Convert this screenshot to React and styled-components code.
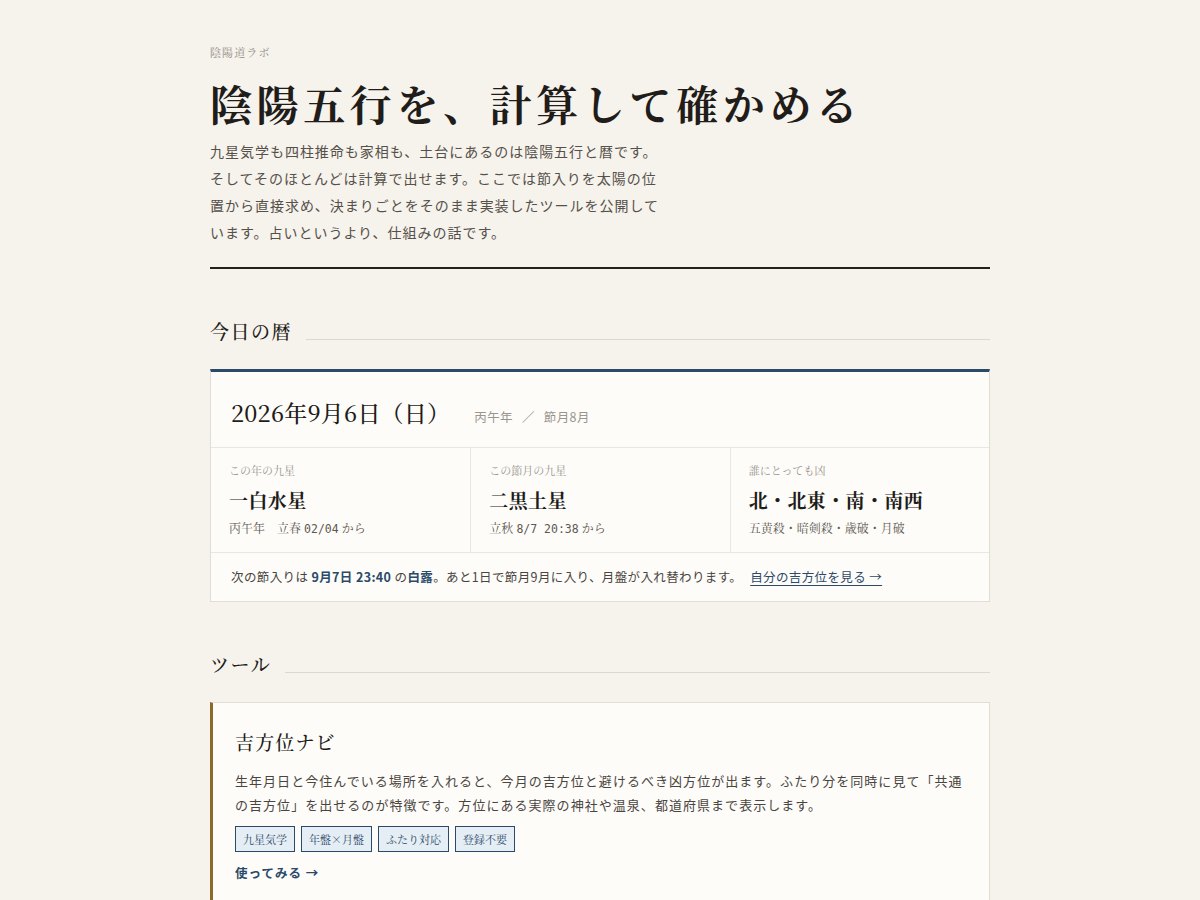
import React from 'react'
import styled, { createGlobalStyle } from 'styled-components'

const GlobalStyle = createGlobalStyle`
    html, body {
        margin: 0;
        padding: 0;
        background: #f6f2ec;
    }
    body {
        font-family: "Noto Sans CJK JP", "Noto Sans", sans-serif;
        color: #2a2622;
    }
`

const serif = `"Noto Serif CJK JP", "Liberation Serif", serif`

const Page = styled.main`
    width: 780px;
    margin: 0 auto;
    padding: 44px 0 0;
`

const SiteName = styled.p`
    font-family: ${serif};
    font-size: 11px;
    letter-spacing: 0.1em;
    color: #8f8a82;
    margin: 0;
`

const Title = styled.h1`
    font-family: ${serif};
    font-size: 42px;
    font-weight: 700;
    letter-spacing: 0.11em;
    color: #1f1c19;
    margin: 14px 0 5px;
    line-height: 1.4;
`

const LeadWrap = styled.div`
    border-bottom: 2px solid #231f1b;
    padding-bottom: 21px;
`

const Lead = styled.p`
    font-size: 14px;
    line-height: 27px;
    letter-spacing: 0.07em;
    color: #55504a;
    max-width: 458px;
    margin: 0;
`

const Section = styled.section`
    margin-top: ${({top}) => top}px;
`

const SectionHead = styled.div`
    display: flex;
    align-items: center;
    gap: 14px;
    margin-bottom: 25px;

    h2 {
        font-family: ${serif};
        font-size: 19px;
        font-weight: 500;
        letter-spacing: 0.08em;
        margin: 0;
        color: #1f1c19;
        white-space: nowrap;
    }

    &::after {
        content: '';
        flex: 1;
        height: 1px;
        background: #dcd7cf;
        margin-top: 18px;
    }
`

const Card = styled.div`
    background: #fdfcf9;
    border: 1px solid #e1ddd5;
    border-top: ${({accent}) => accent === 'top' ? '3px solid #2b4a68' : '1px solid #e1ddd5'};
    border-left: ${({accent}) => accent === 'left' ? '3px solid #8b6a2b' : '1px solid #e1ddd5'};
`

const DateHead = styled.div`
    display: flex;
    align-items: baseline;
    gap: 24px;
    padding: 24px 20px 18px;
    border-bottom: 1px solid #ebe7e0;

    strong {
        font-family: ${serif};
        font-size: 23px;
        font-weight: 500;
        color: #1f1c19;
        letter-spacing: 0.01em;
    }
`

const Meta = styled.span`
    font-size: 12.5px;
    color: #9a958d;
    letter-spacing: 0.03em;

    i {
        font-style: normal;
        margin: 0 9px;
    }
`

const Cols = styled.div`
    display: grid;
    grid-template-columns: repeat(3, 1fr);
    border-bottom: 1px solid #ebe7e0;
`

const Col = styled.div`
    padding: 14px 18px 16px;
    border-left: ${({first}) => first ? 'none' : '1px solid #ebe7e0'};

    .label {
        font-family: ${serif};
        font-size: 11px;
        color: #9a958d;
        margin: 0;
    }
    .value {
        font-family: ${serif};
        font-size: 19px;
        font-weight: 700;
        color: #1f1c19;
        margin: 8px 0 6px;
        letter-spacing: 0.02em;
    }
    .sub {
        font-family: ${serif};
        font-size: 12px;
        color: #5d5850;
        margin: 0;
    }
`

const Mono = styled.span`
    font-family: "DejaVu Sans Mono", "Liberation Mono", monospace;
    font-size: 11.5px;
`

const Note = styled.p`
    font-size: 12.5px;
    color: #4a453f;
    letter-spacing: 0.03em;
    margin: 0;
    padding: 14px 20px 15px;

    b {
        color: #2b4a68;
    }

    a {
        color: #2b4a68;
        margin-left: 8px;
        text-underline-offset: 3px;
    }
`

const ToolBody = styled.div`
    padding: 25px 26px 34px 22px;

    h3 {
        font-family: ${serif};
        font-size: 19px;
        font-weight: 500;
        color: #1f1c19;
        margin: 0 0 14px;
        letter-spacing: 0.06em;
    }

    p {
        font-size: 13px;
        line-height: 24px;
        letter-spacing: 0.08em;
        color: #4a453f;
        margin: 0 0 9px;
    }
`

const Tags = styled.div`
    display: flex;
    gap: 6px;
`

const Tag = styled.span`
    font-family: ${serif};
    font-size: 11px;
    color: #2b4a68;
    background: #e5edf5;
    border: 1px solid #2b4a68;
    padding: 4px 7px;
`

const More = styled.a`
    display: block;
    margin-top: 12px;
    line-height: 18px;
    font-size: 12.5px;
    font-weight: 700;
    color: #2b4a68;
    letter-spacing: 0.08em;
    text-decoration: none;
`

const cols = [
    { label: 'この年の九星', value: '一白水星', sub: <>丙午年　立春 <Mono>02/04</Mono> から</> },
    { label: 'この節月の九星', value: '二黒土星', sub: <>立秋 <Mono>8/7 20:38</Mono> から</> },
    { label: '誰にとっても凶', value: '北・北東・南・南西', sub: '五黄殺・暗剣殺・歳破・月破' },
]

const tags = ['九星気学', '年盤×月盤', 'ふたり対応', '登録不要']

const App = () => {
    return (
        <Page>
            <GlobalStyle />
            <SiteName>陰陽道ラボ</SiteName>
            <Title>陰陽五行を、計算して確かめる</Title>
            <LeadWrap>
                <Lead>
                    九星気学も四柱推命も家相も、土台にあるのは陰陽五行と暦です。そしてそのほとんどは計算で出せます。ここでは節入りを太陽の位置から直接求め、決まりごとをそのまま実装したツールを公開しています。占いというより、仕組みの話です。
                </Lead>
            </LeadWrap>

            <Section top={48}>
                <SectionHead><h2>今日の暦</h2></SectionHead>
                <Card accent="top">
                    <DateHead>
                        <strong>2026年9月6日（日）</strong>
                        <Meta>丙午年<i>／</i>節月8月</Meta>
                    </DateHead>
                    <Cols>
                        {cols.map((c, i) => (
                            <Col key={c.label} first={i === 0}>
                                <p className="label">{c.label}</p>
                                <p className="value">{c.value}</p>
                                <p className="sub">{c.sub}</p>
                            </Col>
                        ))}
                    </Cols>
                    <Note>
                        次の節入りは <b>9月7日 23:40</b> の<b>白露</b>。あと1日で節月9月に入り、月盤が入れ替わります。
                        <a href="#">自分の吉方位を見る →</a>
                    </Note>
                </Card>
            </Section>

            <Section top={48}>
                <SectionHead><h2>ツール</h2></SectionHead>
                <Card accent="left">
                    <ToolBody>
                        <h3>吉方位ナビ</h3>
                        <p>生年月日と今住んでいる場所を入れると、今月の吉方位と避けるべき凶方位が出ます。ふたり分を同時に見て「共通の吉方位」を出せるのが特徴です。方位にある実際の神社や温泉、都道府県まで表示します。</p>
                        <Tags>
                            {tags.map(t => <Tag key={t}>{t}</Tag>)}
                        </Tags>
                        <More href="#">使ってみる →</More>
                    </ToolBody>
                </Card>
            </Section>
        </Page>
    )
}

export default App
